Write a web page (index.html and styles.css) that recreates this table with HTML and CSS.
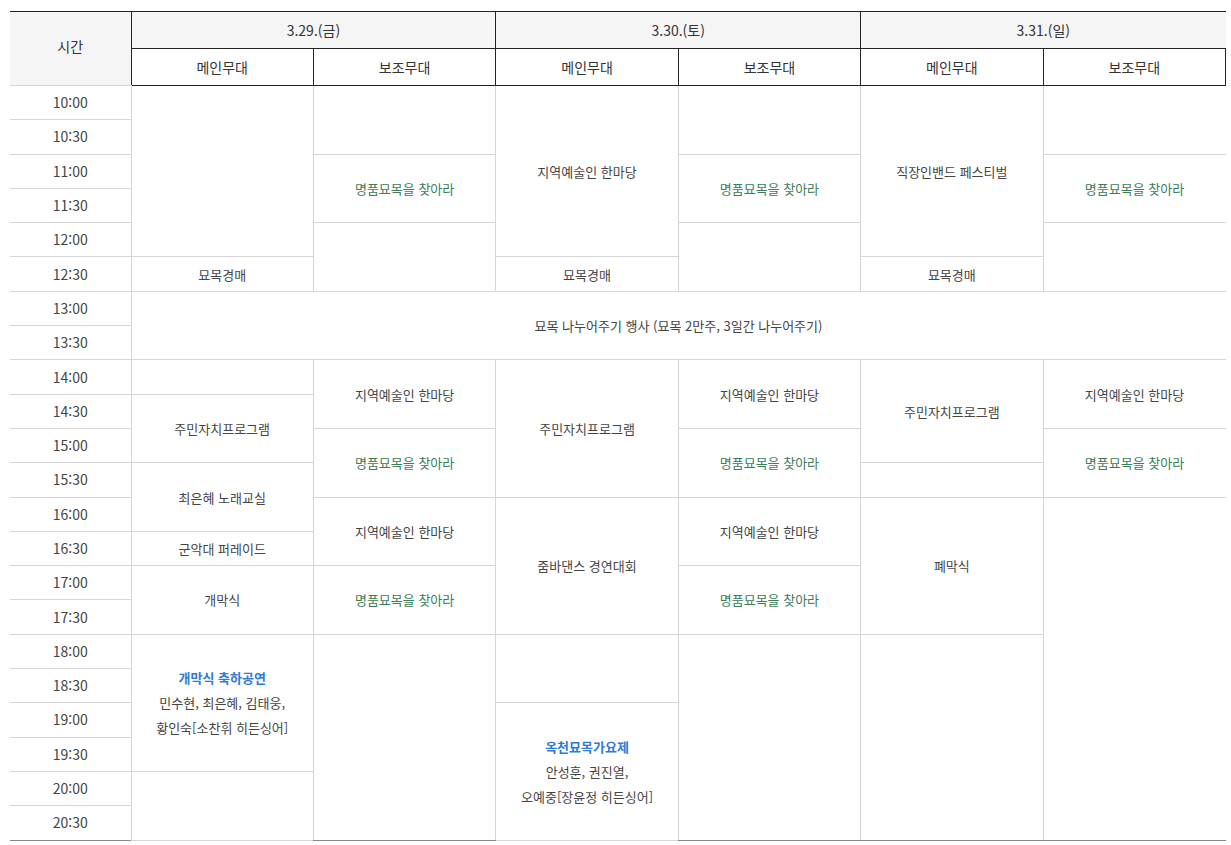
FILE: index.html
```html
<!DOCTYPE html>
<html lang="ko">
<head>
  <meta charset="UTF-8">
  <meta name="viewport" content="width=device-width, initial-scale=1.0">
  <title>행사 일정표</title>
  <link rel="stylesheet" href="styles.css">
</head>
<body>
<div class="wrap">
  <table class="schedule">
    <colgroup>
      <col class="col-time">
      <col><col><col><col><col><col>
    </colgroup>
    <thead>
      <tr class="row-date">
        <th rowspan="2" class="th-time">시간</th>
        <th colspan="2" class="th-date">3.29.(금)</th>
        <th colspan="2" class="th-date">3.30.(토)</th>
        <th colspan="2" class="th-date">3.31.(일)</th>
      </tr>
      <tr class="row-stage">
        <th>메인무대</th><th>보조무대</th>
        <th>메인무대</th><th>보조무대</th>
        <th>메인무대</th><th>보조무대</th>
      </tr>
    </thead>
    <tbody>
      <tr>
        <td class="time">10:00</td>
        <td rowspan="5"></td>
        <td rowspan="2"></td>
        <td rowspan="5">지역예술인 한마당</td>
        <td rowspan="2"></td>
        <td rowspan="5">직장인밴드 페스티벌</td>
        <td rowspan="2"></td>
      </tr>
      <tr><td class="time">10:30</td></tr>
      <tr>
        <td class="time">11:00</td>
        <td rowspan="2" class="green">명품묘목을 찾아라</td>
        <td rowspan="2" class="green">명품묘목을 찾아라</td>
        <td rowspan="2" class="green">명품묘목을 찾아라</td>
      </tr>
      <tr><td class="time">11:30</td></tr>
      <tr>
        <td class="time">12:00</td>
        <td rowspan="2"></td>
        <td rowspan="2"></td>
        <td rowspan="2"></td>
      </tr>
      <tr>
        <td class="time">12:30</td>
        <td>묘목경매</td>
        <td>묘목경매</td>
        <td>묘목경매</td>
      </tr>
      <tr>
        <td class="time">13:00</td>
        <td colspan="6" rowspan="2">묘목 나누어주기 행사 (묘목 2만주, 3일간 나누어주기)</td>
      </tr>
      <tr><td class="time">13:30</td></tr>
      <tr>
        <td class="time">14:00</td>
        <td></td>
        <td rowspan="2">지역예술인 한마당</td>
        <td rowspan="4">주민자치프로그램</td>
        <td rowspan="2">지역예술인 한마당</td>
        <td rowspan="3">주민자치프로그램</td>
        <td rowspan="2">지역예술인 한마당</td>
      </tr>
      <tr>
        <td class="time">14:30</td>
        <td rowspan="2">주민자치프로그램</td>
      </tr>
      <tr>
        <td class="time">15:00</td>
        <td rowspan="2" class="green">명품묘목을 찾아라</td>
        <td rowspan="2" class="green">명품묘목을 찾아라</td>
        <td rowspan="2" class="green">명품묘목을 찾아라</td>
      </tr>
      <tr>
        <td class="time">15:30</td>
        <td rowspan="2">최은혜 노래교실</td>
        <td></td>
      </tr>
      <tr>
        <td class="time">16:00</td>
        <td rowspan="2">지역예술인 한마당</td>
        <td rowspan="4">줌바댄스 경연대회</td>
        <td rowspan="2">지역예술인 한마당</td>
        <td rowspan="4">폐막식</td>
        <td rowspan="10"></td>
      </tr>
      <tr>
        <td class="time">16:30</td>
        <td>군악대 퍼레이드</td>
      </tr>
      <tr>
        <td class="time">17:00</td>
        <td rowspan="2">개막식</td>
        <td rowspan="2" class="green">명품묘목을 찾아라</td>
        <td rowspan="2" class="green">명품묘목을 찾아라</td>
      </tr>
      <tr><td class="time">17:30</td></tr>
      <tr>
        <td class="time">18:00</td>
        <td rowspan="4" class="show">
          <strong>개막식 축하공연</strong><br>
          민수현, 최은혜, 김태웅,<br>
          황인숙[소찬휘 히든싱어]
        </td>
        <td rowspan="6"></td>
        <td rowspan="2"></td>
        <td rowspan="6"></td>
        <td rowspan="6"></td>
      </tr>
      <tr><td class="time">18:30</td></tr>
      <tr>
        <td class="time">19:00</td>
        <td rowspan="4" class="show">
          <strong>옥천묘목가요제</strong><br>
          안성훈, 권진열,<br>
          오예중[장윤정 히든싱어]
        </td>
      </tr>
      <tr><td class="time">19:30</td></tr>
      <tr>
        <td class="time">20:00</td>
        <td rowspan="2"></td>
      </tr>
      <tr><td class="time">20:30</td></tr>
    </tbody>
  </table>
</div>
</body>
</html>
```

FILE: styles.css
```css
body {
  margin: 0;
  padding: 0;
  background: #fff;
  font-family: "Noto Sans CJK KR", "Noto Sans", sans-serif;
  color: #444;
}

.wrap {
  padding: 11px 5px 0 10px;
}

.schedule {
  width: 1216px;
  border-collapse: collapse;
  table-layout: fixed;
  text-align: center;
}

.col-time {
  width: 121px;
}

.schedule th {
  font-weight: 400;
  font-size: 14px;
  color: #333;
  height: 36px;
  padding: 0;
}

.row-date th {
  border-top: 1px solid #222;
  background: #f5f5f5;
}

.th-date {
  border-left: 1px solid #222;
}

.th-date:first-of-type {
  border-left: none;
}

.th-time {
  background: #f5f5f5;
  border-bottom: 1px solid #d5d5d5;
  vertical-align: top;
  padding-top: 24px !important;
}

.row-stage th {
  border: 1px solid #222;
  background: #fff;
}

.schedule td {
  border: 1px solid #d5d5d5;
  height: 33.3px;
  padding: 0;
  font-size: 13px;
  line-height: 25px;
}

.schedule td.time {
  border-left: none;
  font-size: 14px;
}

.schedule tbody tr:last-child td,
.schedule td[rowspan="10"],
.schedule td[rowspan="6"],
.show {
  border-bottom: 1px solid #888;
}

.schedule tbody tr td:last-child {
  border-right: none;
}

.green {
  color: #3a7d58;
}

.show strong {
  color: #2f7ad6;
  font-weight: 600;
}
```
